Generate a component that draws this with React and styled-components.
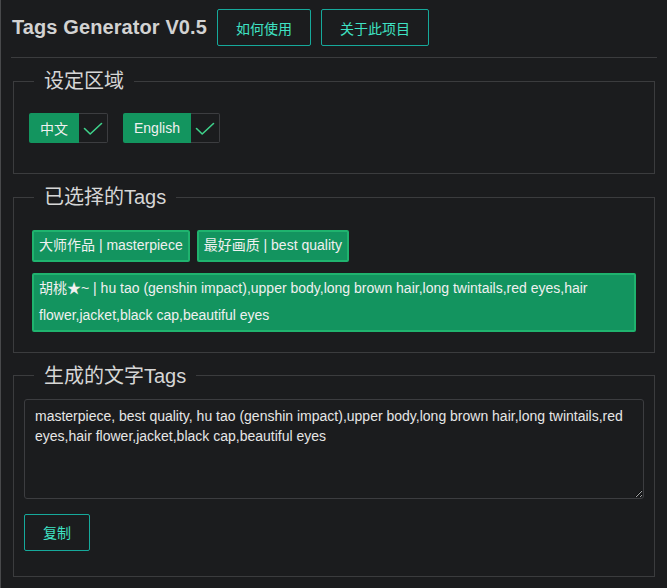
import React from "react";
import styled, { createGlobalStyle } from "styled-components";

const GlobalStyle = createGlobalStyle`
  html, body {
    margin: 0;
    background: #1b1c1e;
  }
  body {
    min-height: 100vh;
    box-sizing: border-box;
    border-left: 1px solid #48494b;
    font-family: "Liberation Sans", Arial, "Noto Sans CJK SC", sans-serif;
    color: #e6e6e6;
  }
`;

const Page = styled.div`
  padding: 0 12px 10px 12px;
`;

const Header = styled.header`
  display: flex;
  align-items: center;
  gap: 10px;
  padding: 9px 0 11px 0;
`;

const Title = styled.h1`
  margin: 0 0 0 -1px;
  font-size: 20px;
  font-weight: bold;
  letter-spacing: 0.1px;
  color: #d2d2d2;
  white-space: nowrap;
`;

const OutlineButton = styled.button`
  height: 37px;
  padding: 0 18px;
  background: transparent;
  border: 1px solid #16a99b;
  border-radius: 2px;
  color: #3fe2c4;
  font-family: inherit;
  font-size: 14px;
  cursor: pointer;
`;

const Divider = styled.div`
  height: 1px;
  background: #3b3c3e;
  margin: 0 -2px;
`;

const Section = styled.fieldset`
  margin: 11px 0 0 0;
  padding: ${(p) => p.$pad};
  border: 1px solid #3b3c3e;
  min-width: 0;
`;

const Legend = styled.legend`
  margin-left: 20px;
  padding: 0 10px;
  font-size: 20px;
  line-height: 24px;
  color: #d6d6d6;
`;

const SectionBody = styled.div`
  padding: 0 ${(p) => p.$side}px;
`;

const ChipRow = styled.div`
  display: flex;
  gap: 15px;
`;

const Chip = styled.div`
  display: flex;
  height: 30px;
`;

const ChipLabel = styled.span`
  display: flex;
  align-items: center;
  padding: 0 11px;
  background: #13955f;
  color: #f0f0f0;
  font-size: 14px;
  border-radius: 2px 0 0 2px;
`;

const ChipCheck = styled.span`
  display: flex;
  align-items: center;
  justify-content: center;
  width: 28px;
  border: 1px solid #3c3d40;
  border-left: none;
  border-radius: 0 2px 2px 0;
`;

const TagList = styled.div`
  display: flex;
  flex-wrap: wrap;
  gap: 11px 7px;
`;

const Tag = styled.div`
  box-sizing: border-box;
  width: ${(p) => (p.$full ? "100%" : "auto")};
  padding: 0 5px;
  background: #13945f;
  border: 2px solid #1fb36e;
  border-radius: 2px;
  color: #f0f0f0;
  font-size: 14px;
  line-height: 27.5px;
`;

const Output = styled.textarea`
  display: block;
  box-sizing: border-box;
  width: 100%;
  height: 100px;
  margin: 0;
  padding: 6px 10px;
  background: #1b1c1e;
  border: 1px solid #3c3d40;
  border-radius: 3px;
  color: #e6e6e6;
  font-family: inherit;
  font-size: 14px;
  line-height: 20px;
  outline: none;
`;

const CopyRow = styled.div`
  margin-top: 15px;
`;

const Check = () => (
  <svg width="20" height="20" viewBox="0 0 20 20" fill="none">
    <polyline
      points="1.5,10.5 7.2,16 18.5,5.5"
      stroke="#3fd28b"
      strokeWidth="1.6"
      strokeLinecap="round"
      strokeLinejoin="round"
    />
  </svg>
);

const outputText =
  "masterpiece, best quality, hu tao (genshin impact),upper body,long brown hair,long twintails,red eyes,hair flower,jacket,black cap,beautiful eyes";

export default function App() {
  return (
    <>
      <GlobalStyle />
      <Page>
        <Header>
          <Title>Tags Generator V0.5</Title>
          <OutlineButton>如何使用</OutlineButton>
          <OutlineButton>关于此项目</OutlineButton>
        </Header>
        <Divider />

        <Section $pad="20px 0 30px 0">
          <Legend>设定区域</Legend>
          <SectionBody $side={15}>
            <ChipRow>
              <Chip>
                <ChipLabel>中文</ChipLabel>
                <ChipCheck>
                  <Check />
                </ChipCheck>
              </Chip>
              <Chip>
                <ChipLabel>English</ChipLabel>
                <ChipCheck>
                  <Check />
                </ChipCheck>
              </Chip>
            </ChipRow>
          </SectionBody>
        </Section>

        <Section $pad="21px 0 20px 0">
          <Legend>已选择的Tags</Legend>
          <SectionBody $side={18}>
            <TagList>
              <Tag>大师作品 | masterpiece</Tag>
              <Tag>最好画质 | best quality</Tag>
              <Tag $full>
                胡桃★~ | hu tao (genshin impact),upper body,long brown hair,long
                twintails,red eyes,hair flower,jacket,black cap,beautiful eyes
              </Tag>
            </TagList>
          </SectionBody>
        </Section>

        <Section $pad="11px 0 25px 0">
          <Legend>生成的文字Tags</Legend>
          <SectionBody $side={10}>
            <Output readOnly value={outputText} />
            <CopyRow>
              <OutlineButton>复制</OutlineButton>
            </CopyRow>
          </SectionBody>
        </Section>
      </Page>
    </>
  );
}
